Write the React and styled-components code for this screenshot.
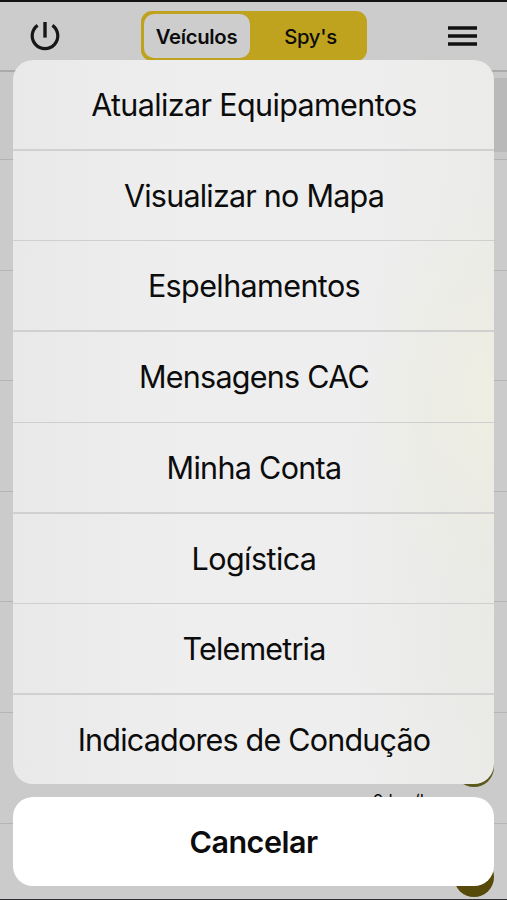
import styled, { createGlobalStyle } from "styled-components";
import { useState } from "react";

const ACTIONS = [
  { label: "Atualizar Equipamentos", spacing: -0.63 },
  { label: "Visualizar no Mapa", spacing: -0.78 },
  { label: "Espelhamentos", spacing: -0.6 },
  { label: "Mensagens CAC", spacing: -0.75 },
  { label: "Minha Conta", spacing: -0.7 },
  { label: "Logística", spacing: -0.57 },
  { label: "Telemetria", spacing: -0.82 },
  { label: "Indicadores de Condução", spacing: -0.8 },
];

const VEHICLES = [
  { id: 1 },
  { id: 2 },
  { id: 3 },
  { id: 4 },
  { id: 5 },
  { id: 6, speed: "0 km/h", badge: "#5d591b" },
  { id: 7, badge: "#56490a" },
];

const GlobalStyle = createGlobalStyle`
  * {
    box-sizing: border-box;
  }

  body {
    margin: 0;
    overflow: hidden;
    background-color: #cbcbcb;
  }

  button {
    margin: 0;
    padding: 0;
    border: 0;
    background: none;
    font: inherit;
    color: inherit;
    cursor: pointer;
  }
`;

const StyledScreen = styled.div`
  position: relative;
  width: 507px;
  height: 900px;
  overflow: hidden;
  border-top: 2px solid #131111;
  background-color: #cbcbcb;
  font-family: Inter, "Liberation Sans", sans-serif;
  color: #0c0c0c;
`;

const StyledHeader = styled.header`
  display: flex;
  align-items: flex-start;
  justify-content: space-between;
  height: 70px;
  padding: 9px 29px 0 29px;
  border-bottom: 2px solid #aaaaaa;
  background-color: #cccccc;
`;

const StyledIconButton = styled.button`
  display: flex;
  align-items: center;
  justify-content: center;
  width: 32px;
  height: 50px;
`;

const StyledSegment = styled.div`
  display: flex;
  width: 226px;
  height: 50px;
  padding: 3px;
  border-radius: 11px;
  background-color: #bfa21d;
`;

const StyledTab = styled.button`
  flex: 0 0 ${(props) => (props.$active ? 106 : 114)}px;
  padding: ${(props) => (props.$active ? "0" : "0 0 0 8px")};
  border-radius: 10px;
  background-color: ${(props) => (props.$active ? "#cdcdcd" : "transparent")};
  font-size: 20.3px;
  font-weight: ${(props) => (props.$active ? 600 : 500)};
  letter-spacing: -0.3px;
`;

const StyledSearch = styled.div`
  display: flex;
  justify-content: flex-end;
  height: 88px;
  padding: 6px 0 7px;
  border-bottom: 1px solid #b3b3b3;
  background-color: #c8c8c8;
`;

const StyledFilter = styled.div`
  width: 90px;
  background-color: #b9b9b9;
`;

const StyledVehicle = styled.div`
  display: flex;
  align-items: center;
  justify-content: flex-end;
  gap: 24px;
  height: 110.6px;
  padding-right: 13px;
  border-bottom: 1px solid #b5b5b5;
`;

const StyledSpeed = styled.span`
  align-self: flex-end;
  padding-bottom: 12px;
  font-size: 17.5px;
  line-height: 20px;
`;

const StyledBadge = styled.span`
  width: 40px;
  height: 40px;
  margin-top: -2px;
  border-radius: 50%;
  background-color: ${(props) => props.$color};
`;

const StyledOverlay = styled.div`
  position: absolute;
  top: -2px;
  left: 0;
  display: flex;
  flex-direction: column;
  justify-content: flex-end;
  gap: 13px;
  width: 100%;
  height: 900px;
  padding: 0 13px 13px;
  border-bottom: 1px solid #302c30;
`;

const StyledSheet = styled.div`
  display: flex;
  flex-direction: column;
  height: 724px;
  overflow: hidden;
  border-radius: 20px;
  background-color: #ededed;
  background-image:
    radial-gradient(ellipse 120px 200px at 100% 47%, #eeeee2 0%, #eeeee200 100%),
    radial-gradient(ellipse 150px 420px at 100% 68%, #e9e9e6 0%, #e9e9e600 100%),
    linear-gradient(90deg, #e9e9e9 0%, #eeeeee 35%, #eeeeee 75%, #ebebe9 100%);
`;

const StyledAction = styled.button`
  flex: 1;
  display: flex;
  align-items: center;
  justify-content: center;
  padding-left: 1px;
  border-bottom: 1px solid #cfcfcf;
  font-size: 30.5px;
  letter-spacing: ${(props) => props.$spacing}px;
  white-space: nowrap;

  &:nth-child(odd) {
    border-bottom: 2px solid #d0d0d0;
  }

  &:last-child {
    border-bottom: 0;
  }
`;

const StyledCancel = styled.button`
  height: 89px;
  border-radius: 20px;
  background-color: #ffffff;
  font-size: 30.5px;
  font-weight: 600;
  letter-spacing: -0.5px;
`;

function PowerIcon() {
  return (
    <svg width="32" height="32" viewBox="0 0 32 32" fill="none" stroke="#171717">
      <path d="M16 2V17.6" strokeWidth="3.4" />
      <path d="M8.6 5.4A12.8 12.8 0 1 0 23.4 5.4" strokeWidth="3.2" />
    </svg>
  );
}

function MenuIcon() {
  return (
    <svg width="32" height="24" viewBox="0 0 32 24" stroke="#111111">
      <path d="M2 4H31M2 12H31M2 20H31" strokeWidth="3.4" />
    </svg>
  );
}

function App() {
  const [tab, setTab] = useState("vehicles");
  const [open, setOpen] = useState(true);

  return (
    <>
      <GlobalStyle />
      <StyledScreen>
        <StyledHeader>
          <StyledIconButton aria-label="Sair">
            <PowerIcon />
          </StyledIconButton>
          <StyledSegment>
            <StyledTab
              $active={tab === "vehicles"}
              onClick={() => setTab("vehicles")}
            >
              Veículos
            </StyledTab>
            <StyledTab $active={tab === "spys"} onClick={() => setTab("spys")}>
              Spy's
            </StyledTab>
          </StyledSegment>
          <StyledIconButton aria-label="Menu" onClick={() => setOpen(true)}>
            <MenuIcon />
          </StyledIconButton>
        </StyledHeader>
        <StyledSearch>
          <StyledFilter />
        </StyledSearch>
        {VEHICLES.map((vehicle) => (
          <StyledVehicle key={vehicle.id}>
            {vehicle.speed && <StyledSpeed>{vehicle.speed}</StyledSpeed>}
            {vehicle.badge && <StyledBadge $color={vehicle.badge} />}
          </StyledVehicle>
        ))}
        {open && (
          <StyledOverlay>
            <StyledSheet>
              {ACTIONS.map((action) => (
                <StyledAction key={action.label} $spacing={action.spacing}>
                  {action.label}
                </StyledAction>
              ))}
            </StyledSheet>
            <StyledCancel onClick={() => setOpen(false)}>Cancelar</StyledCancel>
          </StyledOverlay>
        )}
      </StyledScreen>
    </>
  );
}

export default App;
